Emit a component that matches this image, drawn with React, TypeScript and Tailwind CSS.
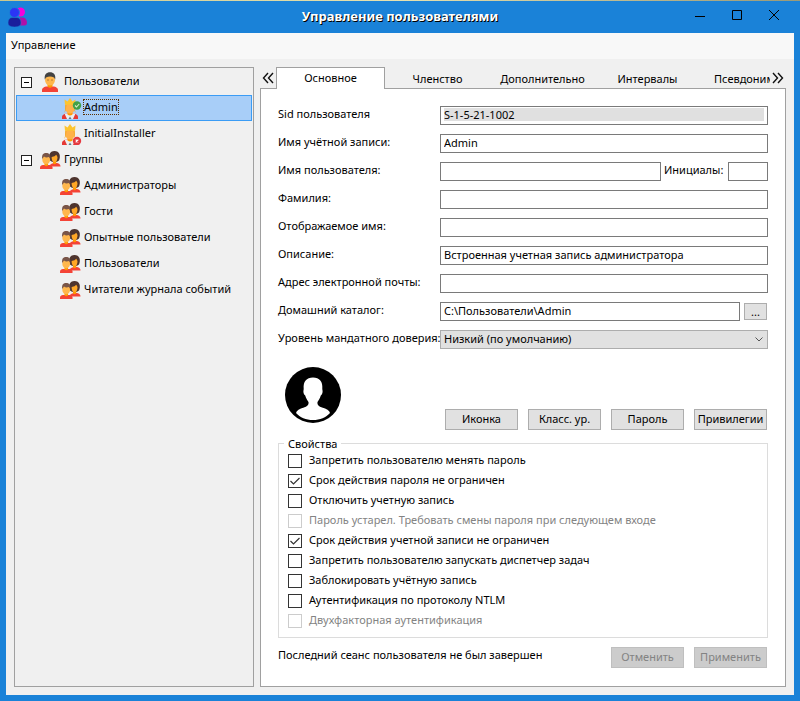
import { useState } from "react";
import type { ReactNode } from "react";

function UserIcon() {
  return (
    <svg viewBox="0 0 22 22" className="size-[22px] shrink-0" aria-hidden="true">
      <path d="M2 21v-2q0-2.500 4-3.500h8q4 1 4 3.500V21z" fill="#f44336" />
      <path d="M7.500 12h5v3.500q-2.500 2.500-5 0z" fill="#ff9800" />
      <ellipse cx="10" cy="9" rx="5" ry="5.500" fill="#ffb74d" />
      <path d="M4.800 8.500C4 3.500 6.500 1.200 10 1.200s6 2 5.200 7.300L14 6.500q-4-2-8 0z" fill="#424242" />
      <path d="M7.500 9h1M11.500 9h1" stroke="#784719" strokeWidth="1" />
    </svg>
  );
}

function KingIcon({ ok }: { ok: boolean }) {
  return (
    <svg viewBox="0 0 22 22" className="size-[22px] shrink-0" aria-hidden="true">
      <path d="M2 22v-2q0-2.500 4-3.500h8q4 1 4 3.500v2z" fill="#e53935" />
      <path d="M4.500 16.500h11L13 22H7z" fill="#eceff1" />
      <path d="M8.500 22l1.500-2.500 1.500 2.500z" fill="#607d8b" />
      <path d="M7.500 13h5v4.500q-2.500 2-5 0z" fill="#ff9800" />
      <ellipse cx="10" cy="11" rx="4.800" ry="5.500" fill="#ffb24a" />
      <path d="M5.200 7.500h1.300l-.5 4q0 3.500-2 4.500 1.200-2 1.200-4.500zM14.800 7.500h-1.300l.5 4q0 3.500 2 4.500-1.200-2-1.200-4.500z" fill="#f5a623" />
      <path d="M5 7.800 4.500 2.500 7.500 4.500 10 1l2.500 3.500 3-2-.5 5.300z" fill="#fdc530" />
      <circle cx="17" cy={ok ? 8.500 : 18} r="4.200" fill={ok ? "#43a047" : "#e53940"} />
      {ok ? (
        <path d="m15 8.500 1.500 1.500 2.700-3" fill="none" stroke="#dcedc8" strokeWidth="1.100" />
      ) : (
        <path d="m15.700 16.700 2.600 2.600m0-2.600-2.600 2.600" stroke="#fff" strokeWidth="1.200" />
      )}
    </svg>
  );
}

function GroupIcon() {
  return (
    <svg viewBox="0 0 22 22" className="size-[22px] shrink-0" aria-hidden="true">
      <path d="M9.500 17.500v-1q1-2 4-2.500h3.500q3.500.5 3.500 3.500z" fill="#f44336" />
      <path d="M10 11.500C8 6.500 9.500 2 14.500 2S21 6.500 19 11.500q-1.500 1.500-4.500 1.500T10 11.500z" fill="#4e342e" />
      <path d="M13 11h3.200v3.500q-1.500 1.500-3.200 0z" fill="#ff9800" />
      <path d="M11.600 8q3.400-.5 4.700-2.300l1.200 2.300q0 5-3 5t-2.900-5z" fill="#ffa726" />
      <path d="M0 20v-1.500q0-2 3-2.500h6.500q3 .5 3 2.500V20z" fill="#f44336" />
      <path d="M4.500 13h3.500v3.500q-1.700 1.500-3.500 0z" fill="#ff9800" />
      <ellipse cx="6.200" cy="10.700" rx="3.900" ry="4.800" fill="#ffb74d" />
      <path d="M2.200 10C1.500 5.500 3.500 4 6.200 4s4.700 1.500 4 6L9 8Q6 9 4 7.500z" fill="#795548" />
    </svg>
  );
}

function AppIcon() {
  return (
    <svg viewBox="0 0 20 21" className="h-[21px] w-5 shrink-0" aria-hidden="true">
      <circle cx="12.500" cy="5" r="4.500" fill="#f500dc" />
      <path d="M12 10.500h3.500q3.500 1 3.500 5.500 0 2-2 2.500h-5z" fill="#b010a8" />
      <circle cx="6.500" cy="5.500" r="5" fill="#2b35f5" stroke="#1a82d8" />
      <path d="M0 16q0-5 4-5.500h5q4 .5 4 5.500 0 4-6.500 4T0 16z" fill="#1a1e9c" stroke="#1a82d8" strokeWidth=".5" />
    </svg>
  );
}

function Chevrons({ right = false }: { right?: boolean }) {
  return (
    <svg viewBox="0 0 12 12" className="size-3" fill="none" stroke="#111" strokeWidth="1.400" aria-hidden="true">
      <path d={right ? "M1 1l4.500 5L1 11M6 1l4.500 5L6 11" : "M6 1L1.500 6 6 11M11 1L6.500 6l4.500 5"} />
    </svg>
  );
}

function Branch({ icon, label, children }: { icon: ReactNode; label: string; children: ReactNode }) {
  const [open, setOpen] = useState(true);
  return (
    <li>
      <div className="flex h-[26px] items-center pl-[5px]">
        <button
          type="button"
          aria-label={label}
          aria-expanded={open}
          onClick={() => setOpen(!open)}
          className="mr-2 grid size-[11px] place-items-center border border-[#222] bg-white"
        >
          <span className="h-px w-[5px] bg-black" />
        </button>
        {icon}
        <span className="ml-0.5 pb-1">{label}</span>
      </div>
      {open && <ul>{children}</ul>}
    </li>
  );
}

function Leaf({ icon, label, selected = false }: { icon: ReactNode; label: string; selected?: boolean }) {
  return (
    <li>
      <button
        type="button"
        className={`flex h-[26px] w-full items-center border pl-[43px] text-left ${
          selected ? "border-[#3b9cf5] bg-[#a8cef8]" : "border-transparent"
        }`}
      >
        {icon}
        <span
          className={`ml-px mb-0.5 border border-dotted leading-[14px] ${selected ? "border-[#5a3000]" : "border-transparent"}`}
        >
          {label}
        </span>
      </button>
    </li>
  );
}

const inputClass =
  "h-[19px] min-w-0 flex-1 border border-[#7a7a7a] bg-white px-[3px] pt-px pb-[3px] leading-[13px] outline-none";

function Field({ id, label, children }: { id: string; label: string; children: ReactNode }) {
  return (
    <div className="flex h-[19px] items-center">
      <label htmlFor={id} className="w-[162px] shrink-0 pb-1 whitespace-nowrap">
        {label}
      </label>
      {children}
    </div>
  );
}

function ActionButton({ children, disabled = false }: { children: ReactNode; disabled?: boolean }) {
  return (
    <button
      type="button"
      disabled={disabled}
      className="h-[21px] w-[73px] border border-[#adadad] bg-[#e1e1e1] pb-0.5 whitespace-nowrap disabled:border-[#bfbfbf] disabled:bg-[#cccccc] disabled:text-[#838383]"
    >
      {children}
    </button>
  );
}

function Check({ label, checked = false, disabled = false }: { label: string; checked?: boolean; disabled?: boolean }) {
  return (
    <label className={`flex h-5 items-center gap-[7px] ${disabled ? "text-[#838383]" : ""}`}>
      <span className="grid size-3.5 shrink-0">
        <input
          type="checkbox"
          defaultChecked={checked}
          disabled={disabled}
          className="peer col-start-1 row-start-1 size-3.5 appearance-none border border-[#333] bg-white disabled:border-[#ccc]"
        />
        <svg
          viewBox="0 0 14 14"
          className="pointer-events-none invisible col-start-1 row-start-1 size-3.5 peer-checked:visible"
          fill="none"
          stroke="#333"
          strokeWidth="1.200"
          aria-hidden="true"
        >
          <path d="M2.500 7 5.500 10 11.500 4" />
        </svg>
      </span>
      <span className="pb-1">{label}</span>
    </label>
  );
}

const tabs = ["Членство", "Дополнительно", "Интервалы"];

export default function App() {
  return (
    <div className="flex min-h-screen flex-col bg-[#1a82d8] font-['Noto_Sans','Open_Sans',sans-serif] text-[11px] leading-[15px] text-black">
      <div className="h-px bg-linear-to-r from-[#c9c78e] via-[#e6e2b0] to-[#9a9a78]" />
      <header className="grid h-8 grid-cols-[1fr_auto_1fr] items-center px-2">
        <AppIcon />
        <h1 className="pb-px text-[13px] font-bold text-white [text-shadow:1px_1px_0_#000]">Управление пользователями</h1>
        <div className="flex items-center justify-end gap-[27px] pr-[13px] pb-1">
          <button type="button" aria-label="Свернуть">
            <svg viewBox="0 0 10 10" className="size-2.5" aria-hidden="true">
              <path d="M0 6.500h10" stroke="#000" />
            </svg>
          </button>
          <button type="button" aria-label="Развернуть">
            <svg viewBox="0 0 10 10" className="size-2.5" aria-hidden="true">
              <path d="M.5.5h9v9h-9z" fill="none" stroke="#000" />
            </svg>
          </button>
          <button type="button" aria-label="Закрыть">
            <svg viewBox="0 0 10 10" className="size-2.5" aria-hidden="true">
              <path d="M0 0l10 10M10 0L0 10" stroke="#000" />
            </svg>
          </button>
        </div>
      </header>

      <div className="mx-1.5 mb-1.5 flex flex-1 flex-col bg-[#f0f0f0]">
        <nav className="flex h-[26px] items-center bg-[#f8f8f8] px-[5px]">
          <button type="button" className="pb-1">
            Управление
          </button>
        </nav>

        <div className="flex flex-1 gap-1.5 p-2">
          <aside className="w-[240px] shrink-0 border border-[#a0a0a0] p-px">
            <ul>
              <Branch icon={<UserIcon />} label="Пользователи">
                <Leaf icon={<KingIcon ok />} label="Admin" selected />
                <Leaf icon={<KingIcon ok={false} />} label="InitialInstaller" />
              </Branch>
              <Branch icon={<GroupIcon />} label="Группы">
                <Leaf icon={<GroupIcon />} label="Администраторы" />
                <Leaf icon={<GroupIcon />} label="Гости" />
                <Leaf icon={<GroupIcon />} label="Опытные пользователи" />
                <Leaf icon={<GroupIcon />} label="Пользователи" />
                <Leaf icon={<GroupIcon />} label="Читатели журнала событий" />
              </Branch>
            </ul>
          </aside>

          <main className="flex min-w-0 flex-1 flex-col">
            <div className="z-10 -mb-px flex h-[22px]">
              <button type="button" aria-label="Назад" className="grid w-4 shrink-0 place-items-center">
                <Chevrons />
              </button>
              <div role="tablist" className="flex min-w-0 flex-1 overflow-hidden">
                <button
                  type="button"
                  role="tab"
                  aria-selected="true"
                  className="w-[109px] shrink-0 border border-b-0 border-[#a0a0a0] bg-white pb-0.5"
                >
                  Основное
                </button>
                {tabs.map((tab) => (
                  <button key={tab} type="button" role="tab" aria-selected="false" className="w-[105px] shrink-0">
                    {tab}
                  </button>
                ))}
                <button type="button" role="tab" aria-selected="false" className="shrink-0 px-3.5">
                  Псевдонимы
                </button>
              </div>
              <button type="button" aria-label="Вперёд" className="grid w-4 shrink-0 place-items-center">
                <Chevrons right />
              </button>
            </div>

            <form className="flex flex-1 flex-col border border-[#a0a0a0] bg-white px-[17px] pt-[17px] pb-[18px]">
              <div className="flex flex-col gap-[9px]">
                <Field id="sid" label="Sid пользователя">
                  <input id="sid" readOnly defaultValue="S-1-5-21-1002" className={`${inputClass} bg-[#e0e0e0]! bg-clip-content`} />
                </Field>
                <Field id="account" label="Имя учётной записи:">
                  <input id="account" defaultValue="Admin" className={inputClass} />
                </Field>
                <Field id="first" label="Имя пользователя:">
                  <input id="first" className={inputClass} />
                  <label htmlFor="initials" className="w-[67px] shrink-0 pb-1 pl-[3px]">
                    Инициалы:
                  </label>
                  <input id="initials" className="h-[19px] w-10 border border-[#7a7a7a] bg-white px-[3px]" />
                </Field>
                <Field id="last" label="Фамилия:">
                  <input id="last" className={inputClass} />
                </Field>
                <Field id="display" label="Отображаемое имя:">
                  <input id="display" className={inputClass} />
                </Field>
                <Field id="about" label="Описание:">
                  <input id="about" defaultValue="Встроенная учетная запись администратора" className={inputClass} />
                </Field>
                <Field id="mail" label="Адрес электронной почты:">
                  <input id="mail" className={inputClass} />
                </Field>
                <Field id="home" label="Домашний каталог:">
                  <input id="home" defaultValue="C:\Пользователи\Admin" className={inputClass} />
                  <button
                    type="button"
                    aria-label="Обзор"
                    className="mr-px ml-1 h-[17px] w-[23px] border border-[#adadad] bg-[#e1e1e1] leading-[13px]"
                  >
                    ...
                  </button>
                </Field>
                <Field id="trust" label="Уровень мандатного доверия:">
                  <div className="grid h-[19px] flex-1 items-center">
                    <select
                      id="trust"
                      className="col-start-1 row-start-1 h-[19px] w-full appearance-none border border-[#adadad] bg-[#e1e1e1] px-[3px] pb-0.5"
                    >
                      <option>Низкий (по умолчанию)</option>
                    </select>
                    <svg
                      viewBox="0 0 8 5"
                      className="pointer-events-none col-start-1 row-start-1 mr-[5px] h-[5px] w-2 justify-self-end"
                      aria-hidden="true"
                    >
                      <path d="M.5.5 4 4 7.500.5" fill="none" stroke="#555" />
                    </svg>
                  </div>
                </Field>
              </div>

              <div className="mt-[17px] flex h-16 items-end justify-between pr-px pl-1.5">
                <svg viewBox="0 0 58 58" className="mb-1.5 size-[58px]" role="img" aria-label="Иконка пользователя">
                  <circle cx="29" cy="29" r="28" fill="#000" />
                  <path
                    d="M29 11.500c-6.500 0-10 4-9.300 11.500-.8 3 0 5.500 1.500 6.500.8 3 2.300 5 3.300 6.500.5 3-1.500 4.500-4.500 5.500-4.500 1.200-7.500 3-8 5.500C16 51.500 22 54 29 54s13-2.500 17-7c-.5-2.500-3.500-4.300-8-5.500-3-1-5-2.500-4.500-5.500 1-1.500 2.500-3.500 3.300-6.500 1.500-1 2.300-3.500 1.500-6.500.7-7.500-2.800-11.500-9.300-11.500z"
                    fill="#fff"
                  />
                </svg>
                <div className="flex gap-2.5">
                  <ActionButton>Иконка</ActionButton>
                  <ActionButton>Класс. ур.</ActionButton>
                  <ActionButton>Пароль</ActionButton>
                  <ActionButton>Привилегии</ActionButton>
                </div>
              </div>

              <fieldset className="mt-1.5 border border-[#dcdcdc] px-[9px] pb-1.5">
                <legend className="-ml-1 px-1">Свойства</legend>
                <Check label="Запретить пользователю менять пароль" />
                <Check label="Срок действия пароля не ограничен" checked />
                <Check label="Отключить учетную запись" />
                <Check label="Пароль устарел. Требовать смены пароля при следующем входе" disabled />
                <Check label="Срок действия учетной записи не ограничен" checked />
                <Check label="Запретить пользователю запускать диспетчер задач" />
                <Check label="Заблокировать учётную запись" />
                <Check label="Аутентификация по протоколу NTLM" />
                <Check label="Двухфакторная аутентификация" disabled />
              </fieldset>

              <div className="mt-[9px] flex items-center gap-2.5 pr-px">
                <p className="flex-1 pb-1.5">Последний сеанс пользователя не был завершен</p>
                <ActionButton disabled>Отменить</ActionButton>
                <ActionButton disabled>Применить</ActionButton>
              </div>
            </form>
          </main>
        </div>
      </div>
    </div>
  );
}
